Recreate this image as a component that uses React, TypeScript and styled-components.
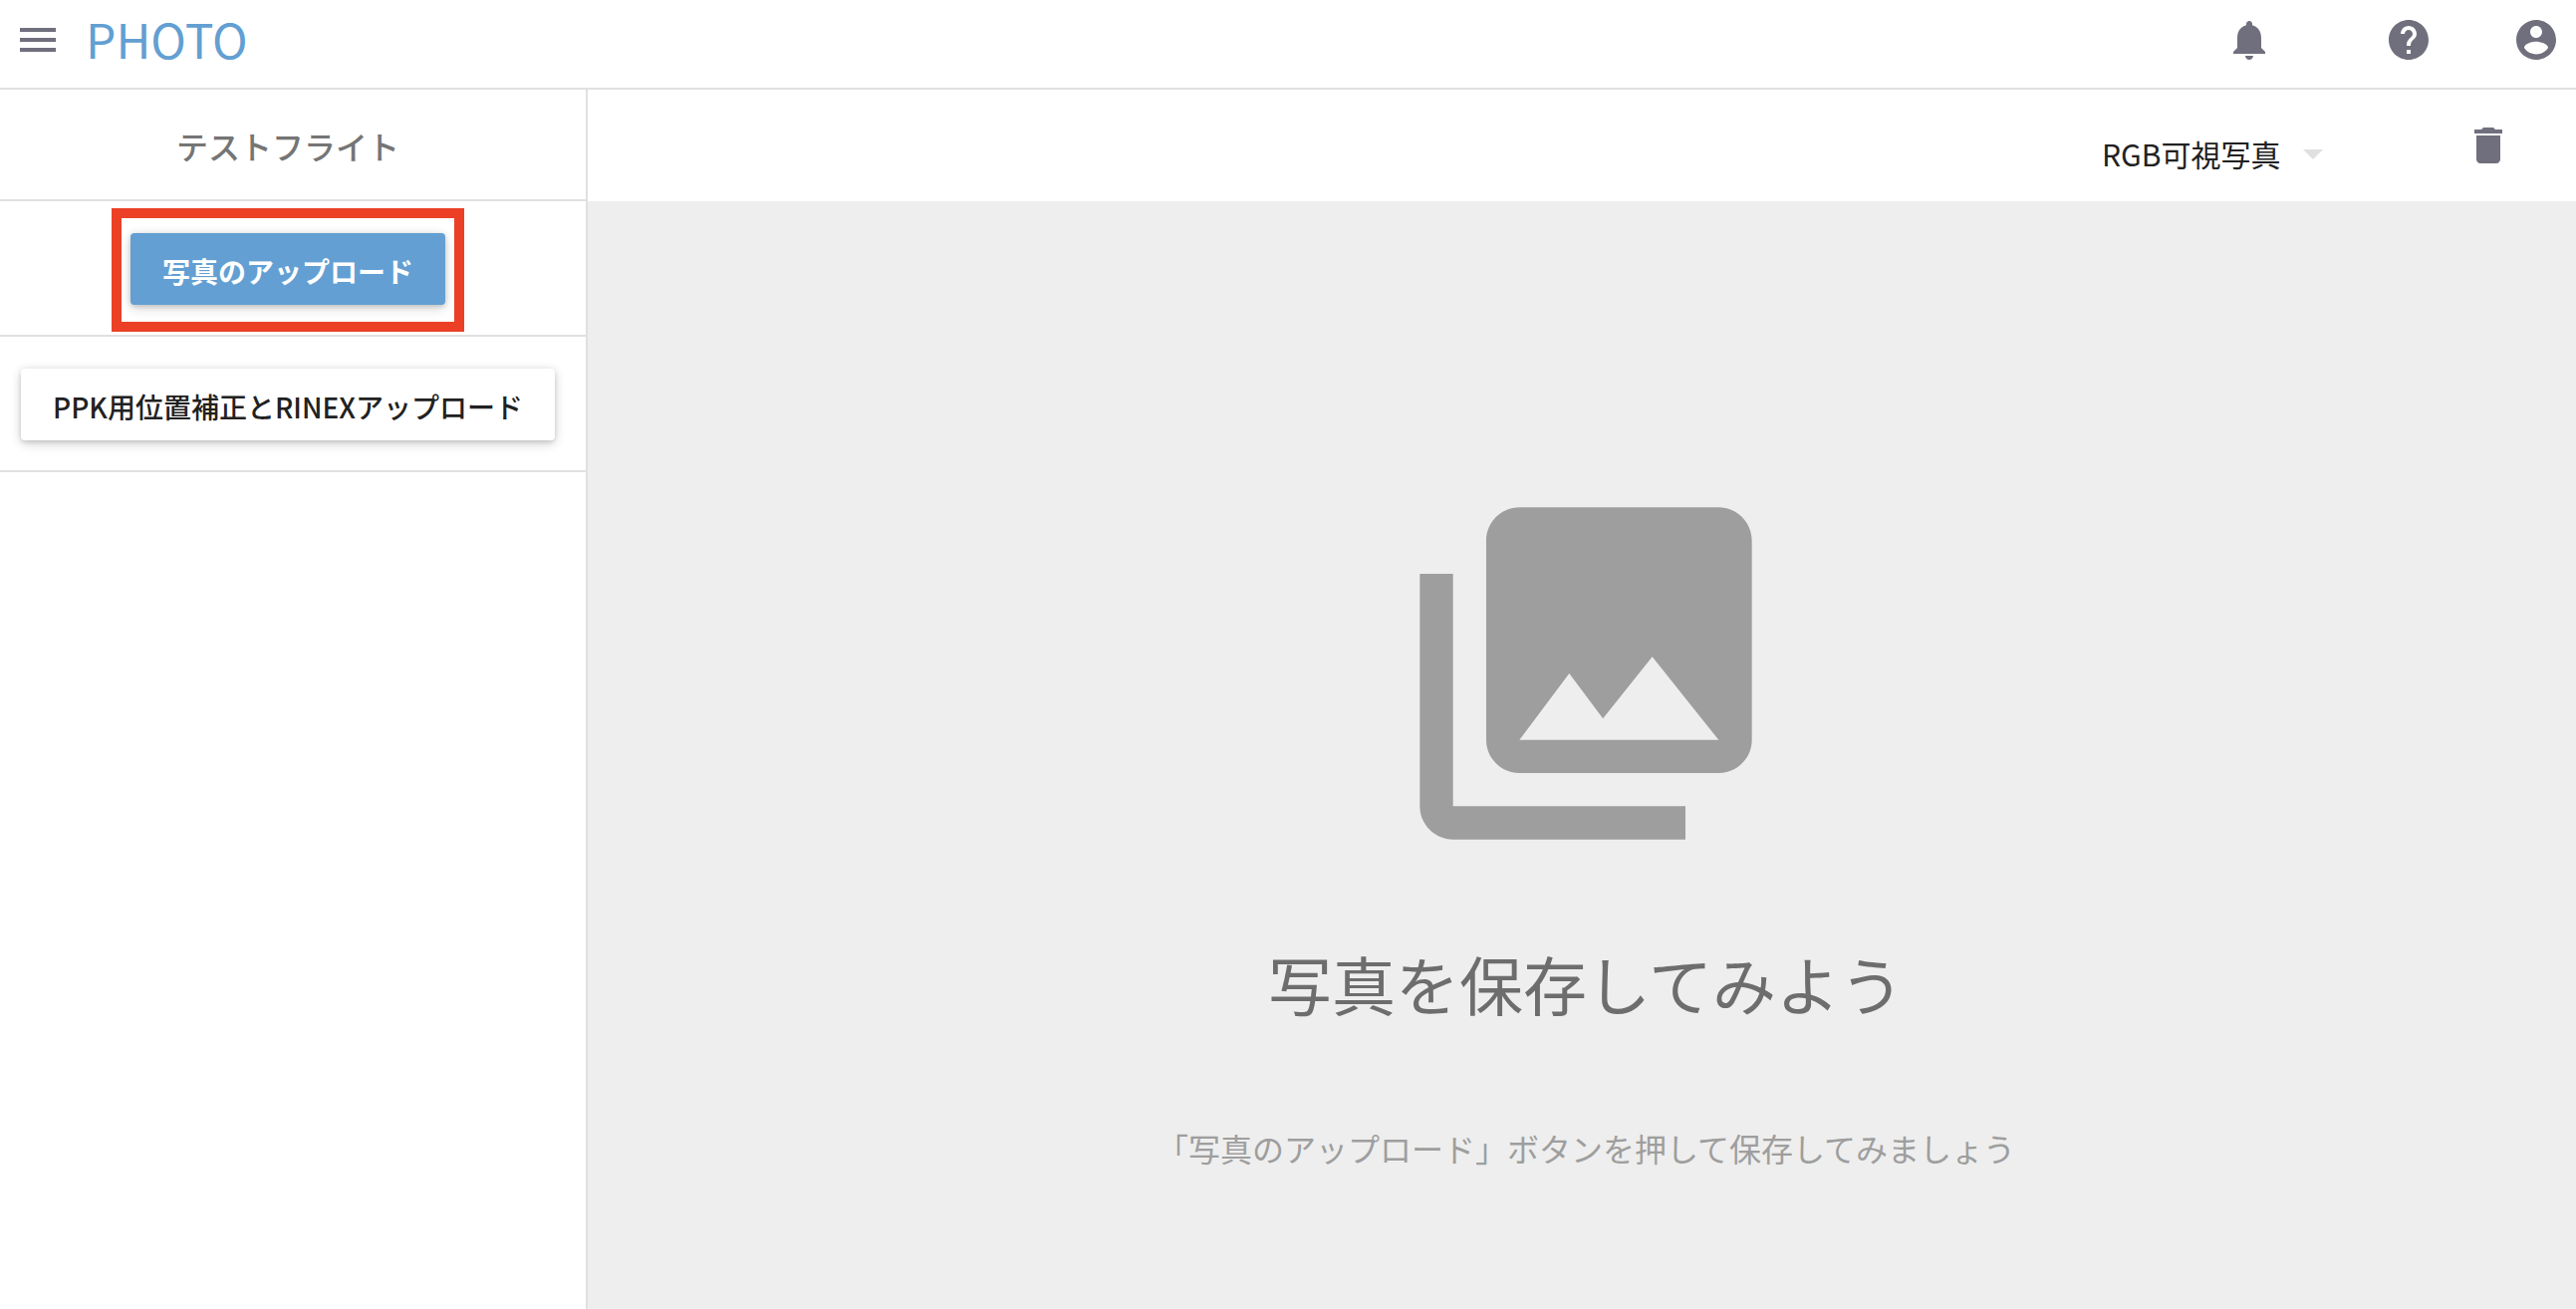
import React from "react";
import styled, { createGlobalStyle } from "styled-components";

const colors = {
  primary: "#639fd2",
  icon: "#706f7d",
  line: "#e0e0e0",
  text: "#212121",
  canvas: "#eeeeee",
  marker: "#eb4026",
};

const GlobalStyle = createGlobalStyle`
  *, *::before, *::after {
    box-sizing: border-box;
  }
  body {
    margin: 0;
    background: #fff;
    color: ${colors.text};
    font-family: "Noto Sans CJK JP", "Noto Sans", sans-serif;
  }
  button, select {
    font-family: inherit;
  }
`;

const Page = styled.div`
  display: flex;
  flex-direction: column;
  min-height: 100vh;
`;

const Header = styled.header`
  display: flex;
  align-items: center;
  height: 90px;
  padding: 0 16px 8px 14px;
  border-bottom: 2px solid ${colors.line};
`;

const Brand = styled.h1`
  flex: 1;
  margin: 0 0 0 24px;
  padding-bottom: 4px;
  color: ${colors.primary};
  font-size: 48px;
  font-weight: 400;
  line-height: 64px;
`;

const HeaderActions = styled.nav`
  display: flex;
  align-items: center;
  gap: 80px;
`;

const ActionGroup = styled.div`
  display: flex;
  margin-left: 32px;
`;

const IconButton = styled.button`
  display: flex;
  padding: 0;
  border: 0;
  background: none;
  color: ${colors.icon};
  cursor: pointer;
`;

const Glyph = styled.svg<{ $size?: number }>`
  display: block;
  flex: none;
  width: ${({ $size = 48 }) => $size}px;
  height: ${({ $size = 48 }) => $size}px;
  fill: currentColor;
`;

const Body = styled.div`
  display: flex;
  flex: 1;
`;

const Sidebar = styled.aside`
  flex: none;
  width: 590px;
  border-right: 2px solid ${colors.line};
`;

const SidebarRow = styled.div`
  display: flex;
  justify-content: center;
  padding: 32px 10px 30px 0;
  border-bottom: 2px solid ${colors.line};
`;

const ProjectName = styled.h2`
  margin: 0;
  padding: 32px 10px 30px 0;
  border-bottom: 2px solid ${colors.line};
  color: #757575;
  font-size: 32px;
  font-weight: 500;
  line-height: 48px;
  text-align: center;
`;

const RaisedButton = styled.button<{ $primary?: boolean }>`
  height: 72px;
  padding: 4px 32px 0;
  border: 0;
  border-radius: 4px;
  background: ${({ $primary }) => ($primary ? colors.primary : "#fff")};
  color: ${({ $primary }) => ($primary ? "#fff" : colors.text)};
  font-size: 28px;
  font-weight: ${({ $primary }) => ($primary ? 700 : 500)};
  line-height: 40px;
  white-space: nowrap;
  box-shadow: 0 2px 4px rgba(0, 0, 0, 0.1), 0 4px 12px rgba(0, 0, 0, 0.14),
    0 0 8px rgba(0, 0, 0, 0.08);
  cursor: pointer;
`;

const Highlighted = styled.div`
  position: relative;

  &::after {
    content: "";
    position: absolute;
    inset: -25px -19px -27px;
    border: 10px solid ${colors.marker};
    pointer-events: none;
  }
`;

const Main = styled.main`
  display: flex;
  flex: 1;
  flex-direction: column;
  min-width: 0;
`;

const Toolbar = styled.div`
  display: flex;
  align-items: center;
  justify-content: flex-end;
  gap: 128px;
  height: 112px;
  padding-right: 64px;
`;

const SelectField = styled.label`
  display: grid;
  align-items: center;
  margin-top: 16px;

  & > * {
    grid-area: 1 / 1;
  }
`;

const Select = styled.select`
  appearance: none;
  height: 48px;
  padding: 0 56px 0 0;
  border: 0;
  background: none;
  color: ${colors.text};
  font-size: 30px;
  cursor: pointer;
`;

const SelectArrow = styled.span`
  justify-self: end;
  color: ${colors.line};
  pointer-events: none;
`;

const EmptyState = styled.section`
  display: flex;
  flex: 1;
  flex-direction: column;
  align-items: center;
  justify-content: center;
  padding: 136px 0 0 8px;
  background: ${colors.canvas};
  color: #9e9e9e;
`;

const EmptyTitle = styled.h2`
  margin: 64px 0 96px;
  color: #6d6d6d;
  font-size: 64px;
  font-weight: 400;
  line-height: 92px;
`;

const EmptyHint = styled.p`
  margin: 0;
  font-size: 32px;
  line-height: 48px;
`;

const paths = {
  menu: "M3 18h18v-2H3v2zm0-5h18v-2H3v2zm0-7v2h18V6H3z",
  bell: "M12 22c1.1 0 2-.9 2-2h-4c0 1.1.89 2 2 2zm6-6v-5c0-3.07-1.64-5.64-4.5-6.32V4c0-.83-.67-1.5-1.5-1.5s-1.5.67-1.5 1.5v.68C7.63 5.36 6 7.92 6 11v5l-2 2v1h16v-1l-2-2z",
  help: "M12 2C6.48 2 2 6.48 2 12s4.48 10 10 10 10-4.48 10-10S17.52 2 12 2zm1 17h-2v-2h2v2zm2.07-7.75l-.9.92C13.45 12.9 13 13.5 13 15h-2v-.5c0-1.1.45-2.1 1.17-2.83l1.24-1.26c.37-.36.59-.86.59-1.41 0-1.1-.9-2-2-2s-2 .9-2 2H8c0-2.21 1.79-4 4-4s4 1.79 4 4c0 .88-.36 1.68-.93 2.25z",
  account:
    "M12 2C6.48 2 2 6.48 2 12s4.48 10 10 10 10-4.48 10-10S17.52 2 12 2zm0 3c1.66 0 3 1.34 3 3s-1.34 3-3 3-3-1.34-3-3 1.34-3 3-3zm0 14.2c-2.5 0-4.71-1.28-6-3.22.03-1.99 4-3.08 6-3.08 1.99 0 5.97 1.09 6 3.08-1.29 1.94-3.5 3.22-6 3.22z",
  arrowDown: "M7 10l5 5 5-5z",
  trash:
    "M6 19c0 1.1.9 2 2 2h8c1.1 0 2-.9 2-2V7H6v12zM19 4h-3.5l-1-1h-5l-1 1H5v2h14V4z",
  photos:
    "M22 16V4c0-1.1-.9-2-2-2H8c-1.1 0-2 .9-2 2v12c0 1.1.9 2 2 2h12c1.1 0 2-.9 2-2zm-11-4l2.03 2.71L16 11l4 5H8l3-4zM2 6v14c0 1.1.9 2 2 2h14v-2H4V6H2z",
};

function Icon({ name, size }: { name: keyof typeof paths; size?: number }) {
  return (
    <Glyph viewBox="0 0 24 24" $size={size} aria-hidden="true">
      <path d={paths[name]} />
    </Glyph>
  );
}

export default function App() {
  return (
    <Page>
      <GlobalStyle />
      <Header>
        <IconButton type="button" aria-label="メニュー">
          <Icon name="menu" />
        </IconButton>
        <Brand>PHOTO</Brand>
        <HeaderActions>
          <IconButton type="button" aria-label="通知">
            <Icon name="bell" />
          </IconButton>
          <ActionGroup>
            <IconButton type="button" aria-label="ヘルプ">
              <Icon name="help" />
            </IconButton>
          </ActionGroup>
          <IconButton type="button" aria-label="アカウント">
            <Icon name="account" />
          </IconButton>
        </HeaderActions>
      </Header>
      <Body>
        <Sidebar>
          <ProjectName>テストフライト</ProjectName>
          <SidebarRow>
            <Highlighted>
              <RaisedButton type="button" $primary>
                写真のアップロード
              </RaisedButton>
            </Highlighted>
          </SidebarRow>
          <SidebarRow>
            <RaisedButton type="button">PPK用位置補正とRINEXアップロード</RaisedButton>
          </SidebarRow>
        </Sidebar>
        <Main>
          <Toolbar>
            <SelectField>
              <Select aria-label="写真の種類" defaultValue="rgb">
                <option value="rgb">RGB可視写真</option>
              </Select>
              <SelectArrow>
                <Icon name="arrowDown" />
              </SelectArrow>
            </SelectField>
            <IconButton type="button" aria-label="削除">
              <Icon name="trash" />
            </IconButton>
          </Toolbar>
          <EmptyState>
            <Icon name="photos" size={400} />
            <EmptyTitle>写真を保存してみよう</EmptyTitle>
            <EmptyHint>「写真のアップロード」ボタンを押して保存してみましょう</EmptyHint>
          </EmptyState>
        </Main>
      </Body>
    </Page>
  );
}
